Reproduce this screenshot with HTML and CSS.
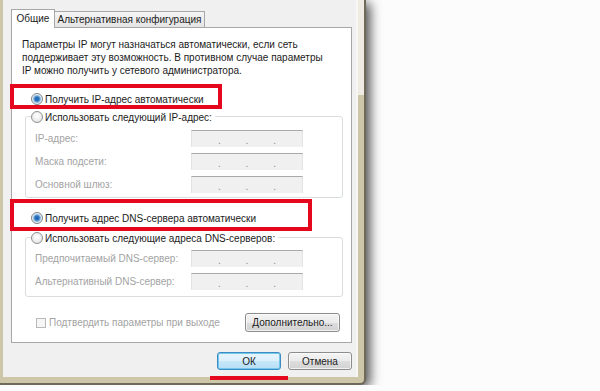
FILE: index.html
```html
<!DOCTYPE html>
<html lang="ru">
<head>
    <meta charset="UTF-8">
    <title>Свойства: Протокол Интернета версии 4 (TCP/IPv4)</title>
    <link rel="stylesheet" href="styles.css">
</head>
<body>
    <div class="window">
        <div class="client">
            <div class="tabs">
                <div class="tab active">Общие</div>
                <div class="tab">Альтернативная конфигурация</div>
            </div>
            <div class="panel">
                <p class="intro">Параметры IP могут назначаться автоматически, если сеть<br>поддерживает эту возможность. В противном случае параметры<br>IP можно получить у сетевого администратора.</p>

                <label class="radio first"><span class="dot on"></span>Получить IP-адрес автоматически</label>

                <div class="group ip-group">
                    <label class="radio caption"><span class="dot"></span>Использовать следующий IP-адрес:</label>
                    <div class="field"><span class="name">IP-адрес:</span><span class="ip"><i>.</i><i>.</i><i>.</i></span></div>
                    <div class="field"><span class="name">Маска подсети:</span><span class="ip"><i>.</i><i>.</i><i>.</i></span></div>
                    <div class="field"><span class="name">Основной шлюз:</span><span class="ip"><i>.</i><i>.</i><i>.</i></span></div>
                </div>

                <label class="radio dns-auto"><span class="dot on"></span>Получить адрес DNS-сервера автоматически</label>

                <div class="group dns-group">
                    <label class="radio caption"><span class="dot"></span>Использовать следующие адреса DNS-серверов:</label>
                    <div class="field"><span class="name">Предпочитаемый DNS-сервер:</span><span class="ip"><i>.</i><i>.</i><i>.</i></span></div>
                    <div class="field"><span class="name">Альтернативный DNS-сервер:</span><span class="ip"><i>.</i><i>.</i><i>.</i></span></div>
                </div>

                <div class="bottom-row">
                    <label class="check"><span class="box"></span>Подтвердить параметры при выходе</label>
                    <button type="button" class="btn advanced">Дополнительно...</button>
                </div>
            </div>
            <div class="buttons">
                <button type="button" class="btn ok">ОК</button>
                <button type="button" class="btn">Отмена</button>
            </div>
        </div>

        <!-- red marks drawn over the dialog -->
        <div class="mark mark-ip"></div>
        <div class="mark mark-dns"></div>
        <div class="mark-line"></div>
    </div>
</body>
</html>
```

FILE: styles.css
```css
body {
    margin: 0;
    background-color: #fcfcfc;
    font-family: "Liberation Sans", Arial, sans-serif;
    font-size: 10px;
    color: #1b1b1b;
}

.window {
    position: relative;
    width: 366px;
    height: 385px;
    box-sizing: border-box;
    padding: 0 6px 6px 3px;
    border-right: 2px solid #6e6959;
    border-bottom: 2px solid #6e6959;
    border-radius: 0 0 6px 0;
    background: linear-gradient(#eeebe3, #eeebe3) right top / 6px 95px no-repeat, #cdc6a8;
    box-shadow: 4px 3px 12px rgba(0, 0, 0, 0.7);
}

.client {
    height: 377px;
    box-sizing: border-box;
    padding: 9px 4px 0 8px;
    background-color: #f0f0f0;
    border-right: 2px solid #f8f7f3;
}

/* tabs */
.tabs {
    display: flex;
    align-items: flex-end;
    height: 18px;
}

.tab {
    width: 150px;
    height: 16px;
    box-sizing: border-box;
    line-height: 15px;
    text-align: center;
    white-space: nowrap;
    border: 1px solid #a7a7a7;
    border-left: none;
    border-bottom: none;
    background: linear-gradient(#f5f5f5, #e4e4e4);
}

.tab.active {
    width: 44px;
    height: 19px;
    line-height: 17px;
    margin-bottom: -1px;
    border-left: 1px solid #a7a7a7;
    background: #fff;
    z-index: 1;
}

.panel {
    height: 316px;
    box-sizing: border-box;
    padding: 10px 8px 0 10px;
    background-color: #fff;
    border: 1px solid #a7a7a7;
}

.intro {
    margin: 0;
    line-height: 13px;
}

/* radio buttons */
.radio {
    display: flex;
    align-items: center;
    height: 16px;
    margin-left: 9px;
}

.radio.first {
    margin-top: 14px;
}

.dot {
    width: 12px;
    height: 12px;
    box-sizing: border-box;
    margin-right: 2px;
    border: 1px solid #8f9091;
    border-radius: 50%;
    background: radial-gradient(circle at 50% 40%, #ffffff, #dedede);
    flex: none;
}

.dot.on {
    border-color: #7d8489;
    background: radial-gradient(circle, #1f5fa8 0, #2c74c0 2px, #8fbbe3 3.5px, #e6eef5 4.5px, #f3f3f3 6px);
}

.dns-auto {
    margin-top: 12px;
}

/* group boxes */
.group {
    margin-left: 3px;
    border: 1px solid #d9dde0;
    border-radius: 3px;
}

.ip-group {
    margin-top: 9px;
    padding-bottom: 4px;
}

.dns-group {
    margin-top: 11px;
    padding-bottom: 6px;
}

.caption {
    width: fit-content;
    margin: -8px 0 0 5px;
    padding-right: 3px;
    background-color: #fff;
}

.field {
    display: flex;
    align-items: center;
    height: 17px;
    margin-top: 6px;
    padding-left: 9px;
    color: #a3a3a3;
}

.caption + .field {
    margin-top: 5px;
}

.dns-group .caption + .field {
    margin-top: 4px;
}

.name {
    width: 156px;
}

.ip {
    display: flex;
    justify-content: space-between;
    align-items: center;
    width: 112px;
    height: 17px;
    box-sizing: border-box;
    padding: 2px 26px 0;
    background-color: #f0f0f0;
    border-top: 1px solid #a9a9a9;
    border-left: 1px solid #e3e3e3;
    border-right: 1px solid #e3e3e3;
    color: #8c8c8c;
}

.ip i {
    font-style: normal;
}

/* bottom of the panel */
.bottom-row {
    display: flex;
    align-items: center;
    margin: 16px 3px 0 0;
}

.check {
    display: flex;
    align-items: center;
    margin-left: 14px;
    color: #a3a3a3;
}

.box {
    width: 10px;
    height: 10px;
    box-sizing: border-box;
    margin-right: 3px;
    border: 1px solid #b9b9b9;
    background-color: #f6f6f6;
}

.btn {
    width: 64px;
    height: 18px;
    padding: 0;
    font-family: inherit;
    font-size: 10px;
    color: #1b1b1b;
    border: 1px solid #8c8c8c;
    border-radius: 3px;
    background: linear-gradient(#f4f4f4, #ebebeb 50%, #dddddd 51%, #d2d2d2);
    box-shadow: inset 0 0 0 1px rgba(255, 255, 255, 0.7);
}

.advanced {
    margin-left: auto;
    width: 95px;
    height: 19px;
}

.buttons {
    display: flex;
    justify-content: flex-end;
    gap: 7px;
    margin-top: 9px;
}

.btn.ok {
    border-color: #3a8cc2;
    background: linear-gradient(#e8f5fc, #dcf0fb 50%, #c6e7f9 51%, #b7dff5);
    box-shadow: inset 0 0 0 1px #74c6ec;
}

/* annotation marks */
.mark {
    position: absolute;
    left: 10px;
    box-sizing: border-box;
    border: 4px solid #e5071d;
}

.mark-ip {
    top: 84px;
    width: 212px;
    height: 25px;
}

.mark-dns {
    top: 199px;
    width: 302px;
    height: 32px;
}

.mark-line {
    position: absolute;
    left: 210px;
    top: 376px;
    width: 78px;
    height: 4px;
    background-color: #e5071d;
}
```
